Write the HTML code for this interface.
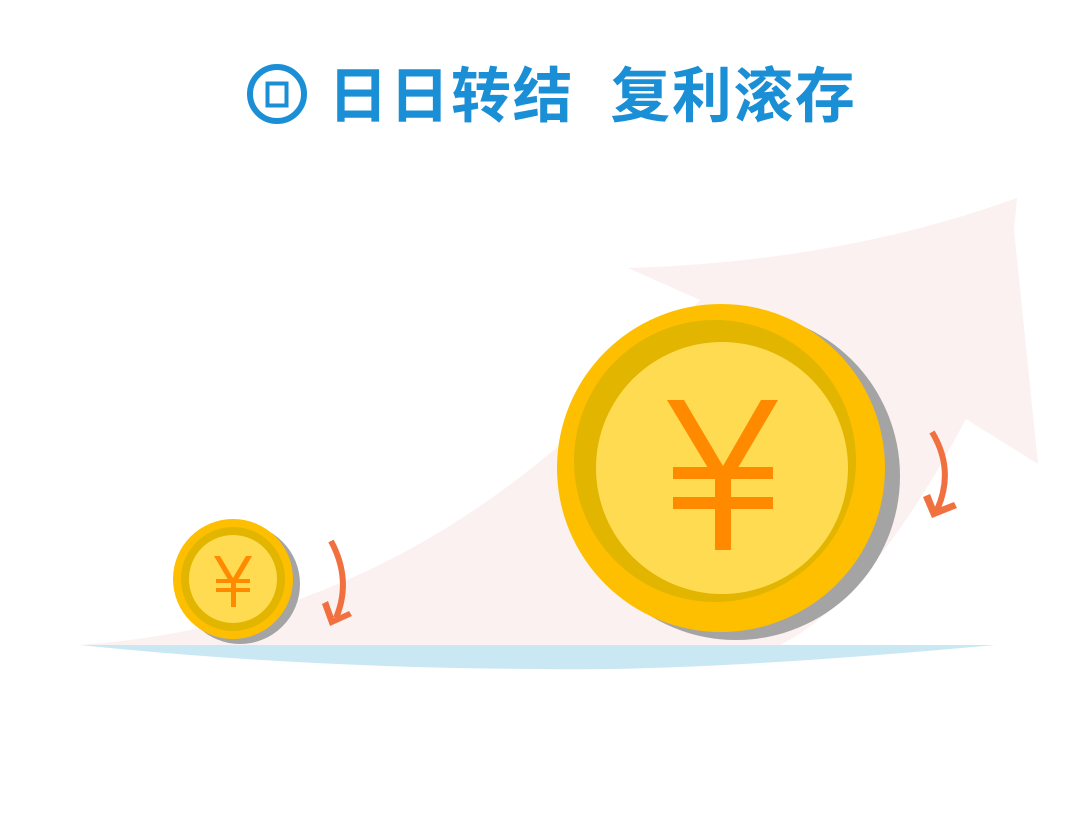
<!DOCTYPE html>
<html><head><meta charset="utf-8"><style>
html,body{margin:0;padding:0;background:#fff;width:1080px;height:819px;overflow:hidden}
.t{position:absolute;top:57px;left:328px;font-family:"Liberation Sans","Noto Sans CJK SC",sans-serif;font-weight:bold;font-size:60px;color:#1b8fd6;letter-spacing:1.5px;white-space:pre;line-height:80px}
</style></head><body>
<svg width="1080" height="819" style="position:absolute;left:0;top:0">
<path d="M80,645 Q440,620 700,300 L628,268 Q840,262 1017,198 L1014,230 L1038,464 L966,419 Q870,600 780,645 Z" fill="#fbf1f0"/>
<path d="M80,645 L995,645 Q700,672 540,669 Q300,668 80,645 Z" fill="#c9e8f3"/>
<circle cx="277" cy="94" r="27" fill="none" stroke="#1b8fd6" stroke-width="6"/>
<rect x="267.5" y="83.5" width="19" height="22" fill="none" stroke="#1b8fd6" stroke-width="4"/>
<circle cx="240" cy="584" r="60" fill="#a4a4a4"/>
<circle cx="233" cy="579" r="60" fill="#fdbf00"/>
<circle cx="233" cy="579" r="52" fill="#e2b500"/>
<circle cx="233" cy="579" r="44" fill="#fedb50"/>
<g fill="#ff8a00">
<polygon points="214,556 220,556 233,578 246,556 252,556 236,583 230,583"/>
<rect x="216" y="579" width="34" height="4"/><rect x="216" y="588" width="34" height="4"/>
<rect x="231" y="580" width="5" height="27"/>
</g>
<circle cx="736" cy="476" r="164" fill="#a4a4a4"/>
<circle cx="721" cy="468" r="164" fill="#fdbf00"/>
<circle cx="715" cy="461" r="141" fill="#e2b500"/>
<circle cx="722" cy="468" r="126" fill="#fedb50"/>
<g fill="#ff8a00">
<polygon points="667,400 684,400 723,466 761,400 778,400 732,478 714,478"/>
<rect x="673" y="467" width="100" height="12"/><rect x="673" y="497" width="100" height="12"/>
<rect x="715" y="470" width="16" height="80"/>
</g>
<path d="M331,541 Q352,580 336,618" fill="none" stroke="#f07040" stroke-width="6"/>
<polygon points="322,604 330,626 352,616 349,611 334,618 328,601" fill="#f07040"/>
<path d="M932,432 Q955,470 937,510" fill="none" stroke="#f07040" stroke-width="6"/>
<polygon points="923,497 932,518 957,508 954,502 936,509 930,494" fill="#f07040"/>
</svg>
<div class="t">日日转结  复利滚存</div>
</body></html>
